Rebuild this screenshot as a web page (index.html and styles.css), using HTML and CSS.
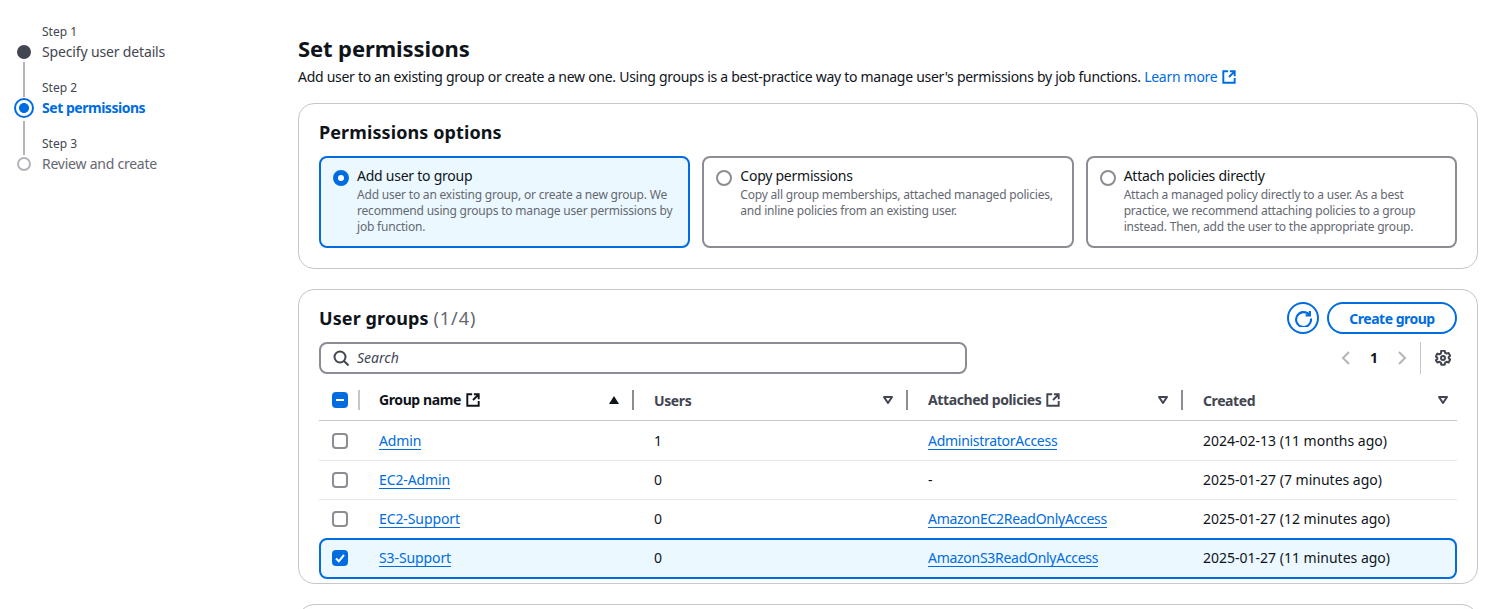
FILE: index.html
```html
<!DOCTYPE html>
<html lang="en">
    <head>
        <meta charset="UTF-8" />
        <meta name="viewport" content="width=device-width, initial-scale=1.0" />
        <title>Set permissions</title>
        <link rel="stylesheet" href="styles.css">
    </head>
    <body>
        <svg class="defs" width="0" height="0">
            <symbol id="ext" viewBox="0 0 16 16">
                <path d="M14.500 9v5.500h-13v-13H7M9 1.500h5.500V7M14.500 1.500L8 8" fill="none" stroke="currentColor" stroke-width="2.200" />
            </symbol>
            <symbol id="caretDown" viewBox="0 0 12 10">
                <path d="M2 2h8L6 8z" fill="none" stroke="currentColor" stroke-width="2" stroke-linejoin="round" />
            </symbol>
        </svg>
        <div class="wrapper">
            <nav class="steps">
                <div class="step">
                    <div class="step-label">Step 1</div>
                    <div class="step-title"><span class="dot dot-done"></span>Specify user details</div>
                </div>
                <div class="step">
                    <div class="step-label">Step 2</div>
                    <div class="step-title step-active"><span class="dot dot-active"></span>Set permissions</div>
                </div>
                <div class="step">
                    <div class="step-label">Step 3</div>
                    <div class="step-title step-todo"><span class="dot dot-todo"></span>Review and create</div>
                </div>
            </nav>
            <main class="main">
                <h1 class="page-title">Set permissions</h1>
                <p class="page-desc">Add user to an existing group or create a new one. Using groups is a best-practice way to manage user's permissions by job functions. <a class="learn" href="#">Learn more<svg class="icon-ext" width="14" height="14"><use href="#ext" /></svg></a></p>

                <section class="card card-options">
                    <h2 class="card-title">Permissions options</h2>
                    <div class="options">
                        <div class="option option-on">
                            <span class="radio radio-on"></span>
                            <div>
                                <div class="option-title">Add user to group</div>
                                <div class="option-desc">Add user to an existing group, or create a new group. We recommend using groups to manage user permissions by job function.</div>
                            </div>
                        </div>
                        <div class="option">
                            <span class="radio"></span>
                            <div>
                                <div class="option-title">Copy permissions</div>
                                <div class="option-desc">Copy all group memberships, attached managed policies, and inline policies from an existing user.</div>
                            </div>
                        </div>
                        <div class="option">
                            <span class="radio"></span>
                            <div>
                                <div class="option-title">Attach policies directly</div>
                                <div class="option-desc">Attach a managed policy directly to a user. As a best practice, we recommend attaching policies to a group instead. Then, add the user to the appropriate group.</div>
                            </div>
                        </div>
                    </div>
                </section>

                <section class="card card-groups">
                    <div class="groups-head">
                        <h2 class="card-title">User groups <span class="count">(1/4)</span></h2>
                        <div class="actions">
                            <button class="btn-icon">
                                <svg width="17" height="17" viewBox="0 0 16 16" fill="none" stroke="currentColor" stroke-width="2">
                                    <path d="M13.500 4.600A7 7 0 1 0 15 8" />
                                    <path d="M14 1v4h-4" />
                                </svg>
                            </button>
                            <button class="btn">Create group</button>
                        </div>
                    </div>
                    <div class="tools">
                        <div class="search">
                            <svg width="16" height="16" viewBox="0 0 16 16" fill="none" stroke="#424650" stroke-width="2">
                                <circle cx="7" cy="7" r="5.500" />
                                <path d="M11 11l4.500 4.500" />
                            </svg>
                            <span>Search</span>
                        </div>
                        <div class="pager">
                            <svg width="16" height="16" viewBox="0 0 16 16" fill="none" stroke="#b4b4bb" stroke-width="2"><path d="M11 2L5 8l6 6" /></svg>
                            <span class="page-num">1</span>
                            <svg width="16" height="16" viewBox="0 0 16 16" fill="none" stroke="#b4b4bb" stroke-width="2"><path d="M5 2l6 6-6 6" /></svg>
                            <span class="pager-sep"></span>
                            <svg class="gear" width="16" height="16" viewBox="0 0 16 16" fill="none" stroke="#424650" stroke-width="2" stroke-linejoin="round">
                                <path d="M6.300 1h3.400l.4 2 1.500.9 2-.7 1.600 2.900-1.500 1.300v1.200l1.500 1.300-1.600 2.900-2-.7-1.500.9-.4 2H6.300l-.4-2-1.500-.9-2 .7L.8 10.600l1.500-1.300V8.100L.8 6.800l1.600-2.900 2 .7 1.500-.9z" transform="translate(0 -.3)" />
                                <circle cx="8" cy="8" r="2" />
                            </svg>
                        </div>
                    </div>
                    <div class="row row-head">
                        <div class="cell"><span class="check check-on">
                            <svg width="14" height="14" viewBox="0 0 14 14"><path d="M3 7h8" stroke="#fff" stroke-width="2" /></svg>
                        </span><span class="sep sep-light"></span></div>
                        <div class="cell cell-head cell-dark"><span class="head-name">Group name<svg class="icon-ext" width="14" height="14"><use href="#ext" /></svg></span>
                            <svg class="caret" width="12" height="10" viewBox="0 0 12 10"><path d="M1 9h10L6 1z" fill="#0f141a" /></svg><span class="sep"></span></div>
                        <div class="cell cell-head"><span class="head-name head-plain">Users</span>
                            <svg class="caret" width="12" height="10"><use href="#caretDown" /></svg><span class="sep"></span></div>
                        <div class="cell cell-head"><span class="head-name">Attached policies<svg class="icon-ext" width="14" height="14"><use href="#ext" /></svg></span>
                            <svg class="caret" width="12" height="10"><use href="#caretDown" /></svg><span class="sep"></span></div>
                        <div class="cell cell-head cell-last"><span class="head-name head-plain">Created</span>
                            <svg class="caret" width="12" height="10"><use href="#caretDown" /></svg></div>
                    </div>
                    <div class="row row-first">
                        <div class="cell"><span class="check"></span></div>
                        <div class="cell"><a class="link" href="#">Admin</a></div>
                        <div class="cell">1</div>
                        <div class="cell"><a class="link link-policy" href="#">AdministratorAccess</a></div>
                        <div class="cell">2024-02-13 (11 months ago)</div>
                    </div>
                    <div class="row">
                        <div class="cell"><span class="check"></span></div>
                        <div class="cell"><a class="link" href="#">EC2-Admin</a></div>
                        <div class="cell">0</div>
                        <div class="cell">-</div>
                        <div class="cell">2025-01-27 (7 minutes ago)</div>
                    </div>
                    <div class="row row-last">
                        <div class="cell"><span class="check"></span></div>
                        <div class="cell"><a class="link" href="#">EC2-Support</a></div>
                        <div class="cell">0</div>
                        <div class="cell"><a class="link link-policy" href="#">AmazonEC2ReadOnlyAccess</a></div>
                        <div class="cell">2025-01-27 (12 minutes ago)</div>
                    </div>
                    <div class="row row-selected">
                        <div class="cell"><span class="check check-on">
                            <svg width="14" height="14" viewBox="0 0 14 14" fill="none"><path d="M3 7.500l2.800 2.800L11 4" stroke="#fff" stroke-width="2" /></svg>
                        </span></div>
                        <div class="cell"><a class="link" href="#">S3-Support</a></div>
                        <div class="cell">0</div>
                        <div class="cell"><a class="link link-policy" href="#">AmazonS3ReadOnlyAccess</a></div>
                        <div class="cell">2025-01-27 (11 minutes ago)</div>
                    </div>
                </section>

                <section class="card card-next"></section>
            </main>
        </div>
    </body>
</html>
```

FILE: styles.css
```css
html,
body {
    margin: 0;
    height: 609px;
    overflow: hidden;
    background-color: #fff;
}

body {
    font-family: 'Noto Sans', sans-serif;
    font-size: 14px;
    line-height: 20px;
    color: #0f141a;
}

.defs {
    display: block;
    height: 0;
}

.wrapper {
    display: flex;
    padding: 0 18px 0 0;
}

/* left step list */
.steps {
    width: 298px;
    flex: none;
    padding: 24px 0 0 42px;
    box-sizing: border-box;
}

.step {
    height: 56px;
}

.step-label {
    font-size: 12px;
    line-height: 16px;
    color: #424650;
}

.step-title {
    position: relative;
    color: #424650;
    line-height: 20px;
    margin-top: 2px;
    letter-spacing: -0.15px;
}

.step-active {
    color: #006ce0;
    font-weight: 700;
    letter-spacing: -0.47px;
}

.step-todo {
    color: #656871;
    letter-spacing: -0.24px;
}

.dot {
    position: absolute;
    left: -25px;
    top: 3px;
    width: 14px;
    height: 14px;
    border-radius: 50%;
    box-sizing: border-box;
    background-color: #424650;
}

/* connecting line under the step dots */
.dot::after {
    content: '';
    position: absolute;
    left: 6px;
    top: 17px;
    width: 2px;
    height: 35px;
    background-color: #b4b4bb;
}

.dot-active {
    left: -28px;
    top: 0;
    width: 20px;
    height: 20px;
    border: 2px solid #006ce0;
    background: radial-gradient(circle, #006ce0 4.6px, #fff 5.4px);
}

.dot-active::after {
    left: 7px;
    top: 21px;
    height: 34px;
}

.dot-todo {
    background-color: #fff;
    border: 2px solid #b4b4bb;
}

.dot-todo::after {
    display: none;
}

/* main column */
.main {
    flex: 1;
    min-width: 0;
}

.page-title {
    margin: 33px 0 0;
    font-size: 22px;
    line-height: 30px;
    font-weight: 700;
    letter-spacing: -0.1px;
}

.page-desc {
    margin: 4px 0 0;
    white-space: nowrap;
    letter-spacing: -0.28px;
}

.learn {
    color: #006ce0;
    text-decoration: none;
}

.icon-ext {
    vertical-align: -2px;
    margin-left: 5px;
}

.card {
    border: 1px solid #c6c6cd;
    border-radius: 16px;
    box-sizing: border-box;
    padding: 0 20px;
}

.card-options {
    height: 166px;
    margin-top: 16px;
    padding-top: 15px;
}

.card-title {
    margin: 0;
    font-size: 18px;
    line-height: 26px;
    font-weight: 700;
    letter-spacing: 0.1px;
}

.count {
    font-weight: 400;
    color: #656871;
    letter-spacing: 1px;
}

.options {
    display: grid;
    grid-template-columns: repeat(3, 1fr);
    gap: 12px;
    margin-top: 11px;
}

.option {
    display: flex;
    height: 92px;
    box-sizing: border-box;
    padding: 9px 12px;
    gap: 8px;
    border: 2px solid #8c8c94;
    border-radius: 8px;
}

.option-on {
    border-color: #006ce0;
    background-color: #ebf8ff;
}

.radio {
    flex: none;
    width: 16px;
    height: 16px;
    margin-top: 3px;
    border: 2px solid #8c8c94;
    border-radius: 50%;
    box-sizing: border-box;
    background-color: #fff;
}

.radio-on {
    border: 5px solid #006ce0;
}

.option-title {
    line-height: 18px;
    letter-spacing: -0.25px;
}

.option-desc {
    margin-top: 2px;
    font-size: 12px;
    line-height: 16px;
    color: #656871;
    letter-spacing: -0.2px;
}

.card-groups {
    height: 295px;
    margin-top: 20px;
    padding-top: 12px;
}

.groups-head {
    display: flex;
    justify-content: space-between;
    align-items: center;
    height: 32px;
}

.actions {
    display: flex;
    gap: 8px;
}

.btn-icon,
.btn {
    height: 32px;
    border: 2px solid #006ce0;
    border-radius: 16px;
    box-sizing: border-box;
    background-color: #fff;
    color: #006ce0;
    font-family: inherit;
    font-size: 14px;
    font-weight: 700;
}

.btn-icon {
    display: flex;
    align-items: center;
    justify-content: center;
    width: 32px;
    padding: 0;
}

.btn {
    width: 130px;
    padding: 0;
    letter-spacing: -0.5px;
}

.tools {
    display: flex;
    justify-content: space-between;
    align-items: center;
    margin-top: 7px;
    height: 34px;
}

.search {
    display: flex;
    align-items: center;
    gap: 8px;
    width: 648px;
    height: 32px;
    box-sizing: border-box;
    padding: 0 12px;
    border: 2px solid #8c8c94;
    border-radius: 8px;
    font-style: italic;
    color: #424650;
}

.pager {
    display: flex;
    align-items: center;
    height: 32px;
}

.page-num {
    margin: 0 16px;
    font-weight: 700;
}

.pager-sep {
    width: 1px;
    height: 32px;
    margin: 0 14px 0 10px;
    background-color: #c6c6cd;
}

.gear {
    margin-right: 6px;
}

/* group table */
.row {
    display: grid;
    grid-template-columns: 40px 275px 274px 275px 1fr;
    height: 39px;
    box-sizing: border-box;
    border-bottom: 1px solid #e8e8ec;
    align-items: center;
}

.row-head {
    height: 41px;
    margin-top: 5px;
    border-bottom-color: #c6c6cd;
    font-weight: 700;
    color: #424650;
    letter-spacing: -0.4px;
}

.row-first {
    height: 40px;
}

.row-last {
    height: 38px;
    border-bottom: 0;
}

.row-selected {
    height: 41px;
    padding-bottom: 2px;
    border: 2px solid #006ce0;
    border-radius: 8px;
    background-color: #ebf8ff;
    grid-template-columns: 38px 275px 274px 275px 1fr;
}

.cell {
    padding-left: 20px;
    display: flex;
    align-items: center;
    white-space: nowrap;
    min-width: 0;
}

.row > .cell:first-child {
    padding-left: 13px;
}

.row-selected > .cell:first-child {
    padding-left: 11px;
}

.cell-head {
    height: 20px;
}

.cell-dark {
    color: #0f141a;
}

.head-name {
    flex: 1;
}

.head-plain {
    padding-top: 1px;
}

.caret {
    color: #424650;
    flex: none;
    margin-right: 12px;
}

.cell-last .caret {
    margin-right: 8px;
}

.sep {
    flex: none;
    width: 2px;
    height: 20px;
    background-color: #8c8c94;
}

.sep-light {
    margin-left: 10px;
    background-color: #c6c6cd;
}

.check {
    display: block;
    flex: none;
    width: 16px;
    height: 16px;
    box-sizing: border-box;
    border: 2px solid #8c8c94;
    border-radius: 4px;
    background-color: #fff;
}

.check-on {
    display: flex;
    align-items: center;
    justify-content: center;
    border: 0;
    background-color: #006ce0;
}

.link {
    color: #006ce0;
    text-decoration: none;
    border-bottom: 1px solid #006ce0;
    line-height: 17px;
    letter-spacing: -0.1px;
}

.link-policy {
    letter-spacing: -0.28px;
}

.card-next {
    height: 100px;
    margin-top: 20px;
}
```
